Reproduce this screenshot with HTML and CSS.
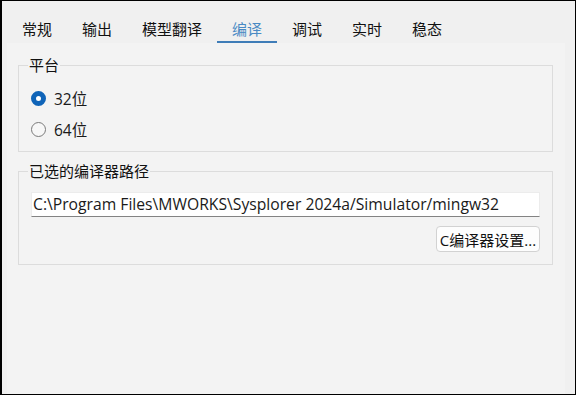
FILE: index.html
```html
<!DOCTYPE html>
<html>
<head>
    <meta charset="utf-8">
    <title>编译设置</title>
    <link rel="stylesheet" href="styles.css">
</head>
<body>
    <div class="window">
        <div class="tabs">
            <div class="tab">常规</div>
            <div class="tab">输出</div>
            <div class="tab">模型翻译</div>
            <div class="tab active">编译</div>
            <div class="tab">调试</div>
            <div class="tab">实时</div>
            <div class="tab">稳态</div>
        </div>

        <div class="pane">
            <fieldset class="group">
                <legend>平台</legend>
                <div class="group-body radios">
                    <label class="radio-row">
                        <span class="radio checked"></span>
                        <span>32位</span>
                    </label>
                    <label class="radio-row">
                        <span class="radio"></span>
                        <span>64位</span>
                    </label>
                </div>
            </fieldset>

            <fieldset class="group second">
                <legend>已选的编译器路径</legend>
                <div class="group-body path">
                    <div class="text-input">C:\Program Files\MWORKS\Sysplorer 2024a/Simulator/mingw32</div>
                    <div class="actions">
                        <button class="button">C编译器设置...</button>
                    </div>
                </div>
            </fieldset>
        </div>
    </div>
</body>
</html>
```

FILE: styles.css
```css
body {
    margin: 0;
    font-family: 'Segoe UI', 'Open Sans', 'Noto Sans CJK SC', sans-serif;
    font-size: 15px;
    color: #1a1a1a;
}

.window {
    box-sizing: border-box;
    width: 576px;
    height: 395px;
    border: 1px solid #000;
    border-left-width: 2px;
    background: #f0f0f0;
    display: flex;
    flex-direction: column;
}

.tabs {
    display: flex;
    margin-top: 16px;
    padding-left: 5px;
}

.tab {
    padding: 0 15px;
    height: 24px;
    line-height: 24px;
    border-bottom: 2px solid transparent;
    font-family: 'Noto Sans CJK SC', sans-serif;
    color: #111;
}

.tab.active {
    color: #4a8ac4;
    border-bottom-color: #3f7db8;
}

.pane {
    flex: 1;
    margin: 0 10px 0 5px;
    padding: 12px 12px 0 11px;
    background: #f3f3f3;
}

.group {
    margin: 0;
    padding: 0;
    border: 1px solid #dcdcdc;
    min-width: 0;
}

.group.second {
    margin-top: 9px;
}

.group legend {
    margin-left: 9px;
    padding: 0 1px;
    line-height: 20px;
    font-family: 'Noto Sans CJK SC', sans-serif;
    color: #111;
}

.radios {
    padding: 8px 12px 6px 12px;
}

.radio-row {
    display: flex;
    align-items: center;
    gap: 8px;
    height: 31px;
    font-family: 'Open Sans', 'Noto Sans CJK SC', sans-serif;
    font-size: 15.5px;
}

.radio {
    box-sizing: border-box;
    width: 15px;
    height: 15px;
    border-radius: 50%;
    border: 1px solid #7a7a7a;
    background: #f7f7f7;
}

.radio.checked {
    border: 5px solid #0f64b8;
    background: #fff;
}

.path {
    padding: 11px 12px 12px 12px;
}

.text-input {
    box-sizing: border-box;
    height: 25px;
    line-height: 23px;
    padding: 0 1px;
    background: #fff;
    border: 1px solid #ececec;
    border-bottom-color: #838383;
    font-family: 'Open Sans', sans-serif;
    font-size: 15.7px;
    white-space: nowrap;
    overflow: hidden;
}

.actions {
    display: flex;
    justify-content: flex-end;
    margin-top: 9px;
}

.button {
    box-sizing: border-box;
    height: 26px;
    padding: 0 1px;
    width: 104px;
    border: 1px solid #d2d2d2;
    border-radius: 4px;
    background: #fdfdfd;
    font-family: 'Open Sans', 'Noto Sans CJK SC', sans-serif;
    font-size: 15px;
    color: #111;
    white-space: nowrap;
}
```
